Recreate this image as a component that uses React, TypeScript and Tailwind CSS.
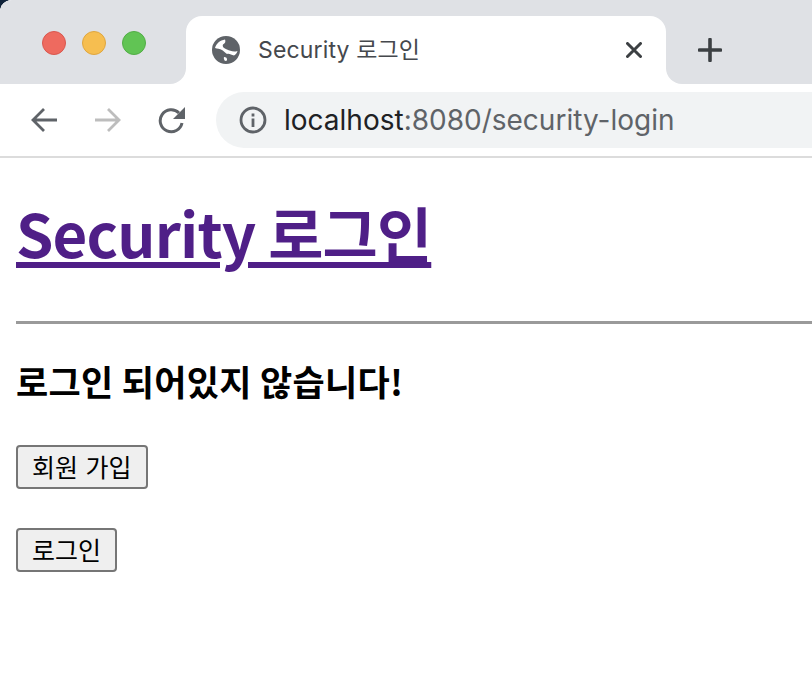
const cjk = "font-['Noto_Sans_CJK_KR','Noto_Sans',sans-serif]";

const Nav = ({ d, className }: { d: string; className: string }) => (
  <svg viewBox="0 0 28 28" className={`w-[28px] h-[28px] ${className}`} fill="none" stroke="currentColor" strokeWidth="2.8">
    <path d={d} />
  </svg>
);

const App = () => {
  return (
    <div className="w-[812px] h-[684px] overflow-hidden bg-[#10233a]">
      <div className="h-full rounded-tl-[12px] overflow-hidden bg-white">
        {/* Tab strip */}
        <div className="flex h-[84px] bg-white">
          <div className="w-[186px] bg-[#dfe1e5] rounded-br-[16px] flex items-start gap-[16px] pt-[31px] pl-[42px]">
            <span className="w-[24px] h-[24px] rounded-full bg-[#ee6a5f] border border-[#d9574e]" />
            <span className="w-[24px] h-[24px] rounded-full bg-[#f6be50] border border-[#dfa63f]" />
            <span className="w-[24px] h-[24px] rounded-full bg-[#61c454] border border-[#52ad46]" />
          </div>
          <div className="w-[480px] bg-[#dfe1e5] pt-[16px]">
            <div className="h-full bg-white rounded-t-[16px] flex items-start pt-[19px] pl-[26px] pr-[24px]">
              <svg viewBox="0 0 28 28" className="w-[28px] h-[28px] mt-[1px]">
                <circle cx="14" cy="14" r="14" fill="#5f6368" />
                <path
                  d="M3 12C4.500 7 8 4.500 13 3.500c1 2 0 4-2 5-1 2 1 4 4 5 3 1 6 3 10.500 1.500-.5 2-2 4-3.500 4.500-3-1-5-2.500-7-1.500-2-1-3-3-5-4-2-1-5-1.500-7-2Z"
                  fill="#fff"
                />
                <path d="M12 21c2 0 3.500 1 3 3.500l-2 .5c-1-1-1.500-3-1-4Z" fill="#fff" />
              </svg>
              <span className="ml-[18px] mt-[1px] text-[23px] leading-[28px] tracking-[0.15px] text-[#45484d] font-['Inter','Noto_Sans_CJK_KR',sans-serif]">
                Security 로그인
              </span>
              <svg viewBox="0 0 16 16" className="w-[16px] h-[16px] ml-auto mt-[7px]" stroke="#3c4043" strokeWidth="3" strokeLinecap="round">
                <path d="M1.500 1.500l13 13M14.500 1.500l-13 13" />
              </svg>
            </div>
          </div>
          <div className="flex-1 bg-[#dfe1e5] rounded-bl-[16px] pt-[38px] pl-[32px]">
            <svg viewBox="0 0 24 24" className="w-[24px] h-[24px]" stroke="#3c4043" strokeWidth="3.6" strokeLinecap="round">
              <path d="M12 1.500v21M1.500 12h21" />
            </svg>
          </div>
        </div>

        {/* Toolbar */}
        <div className="flex items-center h-[74px] bg-white border-b-2 border-[#dcdcdc]">
          <div className="flex items-center ml-[30px] gap-[36px] w-[186px]">
            <Nav d="M27 14H3M14 3L3 14l11 11" className="text-[#5f6368]" />
            <Nav d="M1 14h24M14 3l11 11-11 11" className="text-[#bdbdbd]" />
            <svg viewBox="0 0 28 28" className="w-[28px] h-[28px]" fill="none">
              <path d="M24 17a11 11 0 1 1-3-10" stroke="#5f6368" strokeWidth="3" />
              <path d="M27 1v12H15z" fill="#5f6368" />
            </svg>
          </div>
          <div className="flex-1 h-[56px] bg-[#f1f3f4] rounded-l-[28px] flex items-center pl-[23px]">
            <svg viewBox="0 0 28 28" className="w-[28px] h-[28px]" fill="none">
              <circle cx="14" cy="14" r="12" stroke="#5f6368" strokeWidth="2.800" />
              <path d="M12.600 7.500h2.800v3h-2.800zM12.600 12.500h2.800v8.500h-2.800z" fill="#5f6368" />
            </svg>
            <span className="ml-[17px] text-[28px] leading-[32px] text-[#202124] font-['Inter',sans-serif]">
              localhost<span className="text-[#5f6368]">:8080/security-login</span>
            </span>
          </div>
        </div>

        {/* Page */}
        <div className={`pl-[16px] text-black ${cjk}`}>
          <h1 className="pt-[34px] text-[60px] leading-[80px] font-bold tracking-[-0.85px]">
            <a href="#" className="text-[#4f1f87] underline decoration-[6px] underline-offset-[4px]">
              Security 로그인
            </a>
          </h1>
          <hr className="mt-[49px] border-t-[3px] border-[#9a9a9a]" />
          <h3 className="mt-[33px] text-[35px] leading-[48px] font-bold tracking-[0.3px]">로그인 되어있지 않습니다!</h3>
          <div className="mt-[40px]">
            <button className="block h-[44px] px-[14px] pb-[3px] text-[25px] leading-[28px] [word-spacing:2px] bg-[#efefef] border-2 border-[#767676] rounded-[4px]">
              회원 가입
            </button>
          </div>
          <div className="mt-[39px]">
            <button className="block h-[44px] px-[14px] pb-[3px] text-[25px] leading-[28px] bg-[#efefef] border-2 border-[#767676] rounded-[4px]">
              로그인
            </button>
          </div>
        </div>
      </div>
    </div>
  );
};

export default App;
